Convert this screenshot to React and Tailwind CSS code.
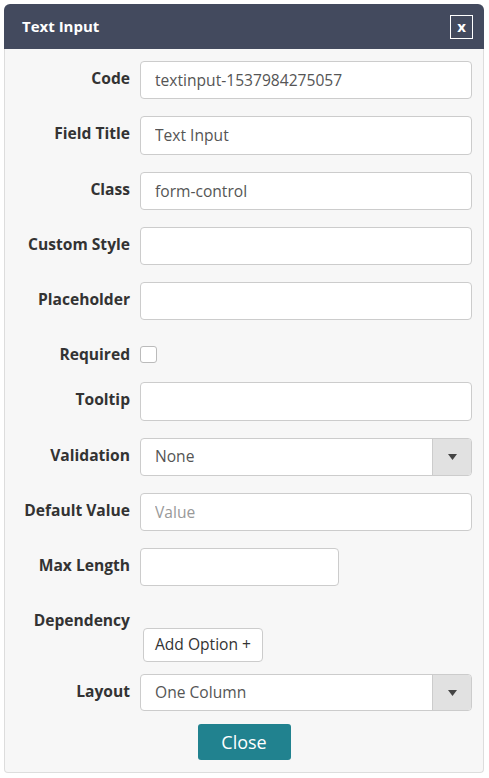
import React from 'react';

const font = { fontFamily: '"Open Sans", "Liberation Sans", sans-serif' };

const Label = ({ children }) => (
  <label className="w-[131px] shrink-0 pr-[10px] pt-[7px] text-right text-[15.6px] font-bold leading-[21px] text-[#333]">
    {children}
  </label>
);

const TextField = ({ value = '', placeholder = '', width = 'w-full' }) => (
  <input
    type="text"
    readOnly
    defaultValue={value}
    placeholder={placeholder}
    className={`${width} h-[38.25px] rounded-[4px] border border-[#ccc] bg-white px-[14px] text-[15.6px] text-[#555] placeholder:text-[#999] outline-none`}
  />
);

const Select = ({ value, height = 'h-[38px]' }) => (
  <div className={`flex ${height} w-full overflow-hidden rounded-[4px] border border-[#ccc] bg-white`}>
    <div className="flex flex-1 items-center pl-[14px] text-[15.6px] text-[#555]">{value}</div>
    <div className="flex w-[39px] items-center justify-center border-l border-[#ccc] bg-[#e1e1e1]">
      <svg width="9" height="6" viewBox="0 0 9 6">
        <path d="M0 0 L9 0 L4.5 6 Z" fill="#444" />
      </svg>
    </div>
  </div>
);

const Row = ({ label, children, className = 'mb-[17px]' }) => (
  <div className={`flex ${className}`}>
    <Label>{label}</Label>
    <div className="flex-1">{children}</div>
  </div>
);

export default function App() {
  return (
    <div className="bg-white p-[4px]" style={font}>
      <div className="w-[480px]">
        {/* Header */}
        <div className="flex h-[45px] items-center justify-between rounded-t-[6px] bg-[#434a5e] pl-[18px] pr-[11px]">
          <span className="text-[15px] font-bold text-white">Text Input</span>
          <button className="flex h-[24px] w-[23px] items-center justify-center border border-white text-[15px] font-bold leading-none text-white">
            x
          </button>
        </div>

        {/* Body */}
        <div className="rounded-b-[4px] border border-t-0 border-[#ddd] bg-[#f7f7f7] pb-[12px] pl-[4px] pr-[11px] pt-[12px]">
          <Row label="Code"><TextField value="textinput-1537984275057" /></Row>
          <Row label="Field Title"><TextField value="Text Input" /></Row>
          <Row label="Class"><TextField value="form-control" /></Row>
          <Row label="Custom Style"><TextField /></Row>
          <Row label="Placeholder"><TextField /></Row>
          <Row label="Required">
            <div className="mt-[9px] h-[17px] w-[17px] rounded-[3px] border border-[#bbb] bg-white" />
          </Row>
          <Row label="Tooltip"><TextField /></Row>
          <Row label="Validation"><Select value="None" /></Row>
          <Row label="Default Value"><TextField placeholder="Value" /></Row>
          <Row label="Max Length"><TextField width="w-[199px]" /></Row>
          <Row label="Dependency" className="h-[25px]">
            <div />
          </Row>
          <div className="flex">
            <div className="w-[131px] shrink-0" />
            <button className="ml-[3px] h-[34px] w-[120px] rounded-[4px] border border-[#ccc] bg-white text-[15.6px] text-[#333]">
              Add Option +
            </button>
          </div>
          <Row label="Layout" className="mt-[12px]"><Select value="One Column" height="h-[37px]" /></Row>
          <div className="mt-[13px] flex justify-center pl-[7px]">
            <button className="h-[36px] w-[93px] rounded-[3px] bg-[#21828f] text-[18px] text-white">
              Close
            </button>
          </div>
        </div>
      </div>
    </div>
  );
}
